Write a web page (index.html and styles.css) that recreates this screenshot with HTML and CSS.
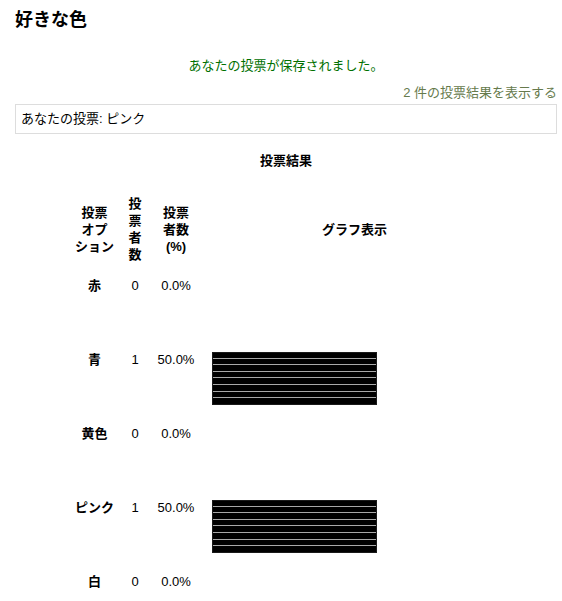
FILE: index.html
```html
<!DOCTYPE html>
<html lang="ja">
<head>
<meta charset="utf-8">
<title>好きな色</title>
<link rel="stylesheet" href="styles.css">
</head>
<body>
<div class="page">
  <h2 class="title">好きな色</h2>
  <div class="notice">あなたの投票が保存されました。</div>
  <div class="results-link">2 件の投票結果を表示する</div>
  <div class="yourvote">あなたの投票: ピンク</div>
  <div class="results-title">投票結果</div>
  <table class="results">
    <colgroup>
      <col class="c-opt">
      <col class="c-num">
      <col class="c-pct">
      <col class="c-graph">
    </colgroup>
    <thead>
      <tr>
        <th>投票<br>オプ<br>ション</th>
        <th>投<br>票<br>者<br>数</th>
        <th>投票<br>者数<br>(%)</th>
        <th class="graph-head">グラフ表示</th>
      </tr>
    </thead>
    <tbody>
      <tr>
        <th>赤</th><td>0</td><td>0.0%</td>
        <td class="graph"><div class="bar-slot"></div></td>
      </tr>
      <tr>
        <th>青</th><td>1</td><td>50.0%</td>
        <td class="graph"><div class="bar-slot"><div class="bar"></div></div></td>
      </tr>
      <tr>
        <th>黄色</th><td>0</td><td>0.0%</td>
        <td class="graph"><div class="bar-slot"></div></td>
      </tr>
      <tr>
        <th>ピンク</th><td>1</td><td>50.0%</td>
        <td class="graph"><div class="bar-slot"><div class="bar"></div></div></td>
      </tr>
      <tr>
        <th>白</th><td>0</td><td>0.0%</td>
        <td class="graph"><div class="bar-slot"></div></td>
      </tr>
    </tbody>
  </table>
</div>
</body>
</html>
```

FILE: styles.css
```css
html, body {
  margin: 0;
  padding: 0;
  background: #fff;
}
body {
  font-family: "Liberation Sans", "Noto Sans CJK JP", sans-serif;
  font-size: 13px;
  color: #000;
}
.page {
  padding: 8px 5px 0 15px;
}
.title {
  margin: 0;
  font-size: 18px;
  line-height: 20px;
  font-weight: bold;
  font-family: "Noto Sans CJK JP", sans-serif;
}
.notice {
  margin-top: 30px;
  line-height: 16px;
  text-align: center;
  color: #007000;
}
.results-link {
  margin-top: 11px;
  line-height: 16px;
  text-align: right;
  color: #667a4c;
}
.yourvote {
  margin-top: 3px;
  border: 1px solid #dddddd;
  padding: 6px 5px;
  line-height: 16px;
}
.results-title {
  margin-top: 19px;
  line-height: 16px;
  text-align: center;
  font-weight: bold;
}
.results {
  margin: 26px auto 0;
  width: 422px;
  table-layout: fixed;
  border-collapse: collapse;
  border-spacing: 0;
}
.c-opt { width: 39px; }
.c-num { width: 42px; }
.c-pct { width: 40px; }
.c-graph { width: 301px; }
.results th,
.results td {
  padding: 0;
  text-align: center;
  white-space: nowrap;
}
.results thead th {
  font-weight: bold;
  line-height: 17px;
  vertical-align: middle;
  padding-bottom: 5px;
}
.results thead th.graph-head {
  padding-left: 16px;
}
.results tbody th,
.results tbody td {
  vertical-align: top;
  line-height: 16px;
  padding-top: 10px;
  padding-bottom: 10.5px;
}
.results tbody th {
  font-weight: bold;
}
.results tbody td.graph {
  text-align: left;
  padding-left: 16px;
}
.bar-slot {
  height: 53.5px;
}
.bar {
  width: 165px;
  height: 53px;
  background: repeating-linear-gradient(
    to bottom,
    #000 0px,
    #000 5.6px,
    #a8a8a8 5.6px,
    #a8a8a8 6.6px
  );
  box-shadow: inset 0 0 0 1px #1a1a1a;
}
```
